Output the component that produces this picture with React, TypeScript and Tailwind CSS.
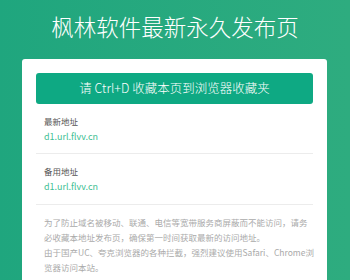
export default function App() {
  const font = { fontFamily: '"Noto Sans CJK SC", "Noto Sans", sans-serif' };
  return (
    <div
      className="w-[350px] h-[280px] overflow-hidden bg-gradient-to-r from-[#1fa67e] to-[#2eac7f]"
      style={font}
    >
      <div className="h-[59px] flex items-center justify-center pb-[7px]">
        <h1 className="text-[22.5px] leading-none text-white font-light">
          枫林软件最新永久发布页
        </h1>
      </div>
      <div className="mx-[22px] w-[305px] bg-white rounded-t-[3px] px-[14px] pt-[14px] pb-[20px]">
        <div className="h-[31px] rounded-[3px] bg-[#0ea983] flex items-center justify-center text-white text-[12.5px] leading-none font-light">
          请 Ctrl+D 收藏本页到浏览器收藏夹
        </div>
        <div className="px-[8px] pt-[10px] pb-[9px] border-b border-[#ececec]">
          <div className="text-[8.5px] leading-[15px] text-[#555]">最新地址</div>
          <div className="text-[9px] leading-[15px] text-[#3fbf95]">d1.url.flvv.cn</div>
        </div>
        <div className="px-[8px] pt-[10px] pb-[10px] border-b border-[#ececec]">
          <div className="text-[8.5px] leading-[15px] text-[#555]">备用地址</div>
          <div className="text-[9px] leading-[15px] text-[#3fbf95]">d1.url.flvv.cn</div>
        </div>
        <div className="px-[8px] pt-[10px] text-[8.5px] leading-[15px] text-[#aaa] whitespace-nowrap">
          <div>为了防止域名被移动、联通、电信等宽带服务商屏蔽而不能访问，请务</div>
          <div>必收藏本地址发布页，确保第一时间获取最新的访问地址。</div>
          <div>由于国产UC、夸克浏览器的各种拦截，强烈建议使用Safari、Chrome浏</div>
          <div>览器访问本站。</div>
        </div>
      </div>
    </div>
  );
}
